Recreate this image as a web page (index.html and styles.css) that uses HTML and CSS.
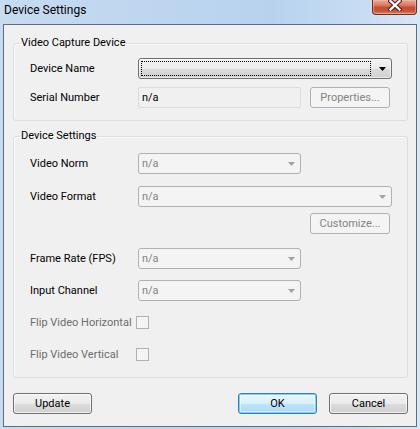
FILE: index.html
```html
<!DOCTYPE html>
<html>
<head>
<meta charset="utf-8">
<link rel="stylesheet" href="styles.css">
</head>
<body>
<div class="window">
  <div class="titlebar">
    <span class="title">Device Settings</span>
    <div class="close">
      <svg width="14" height="11" viewBox="0 0 14 11">
        <path d="M2.5 1 L11.5 9.5 M11.5 1 L2.5 9.5" stroke="#5b1a10" stroke-width="4.4" stroke-linecap="square" fill="none"/>
        <path d="M2.5 1 L11.5 9.5 M11.5 1 L2.5 9.5" stroke="#ffffff" stroke-width="2.4" stroke-linecap="square" fill="none"/>
      </svg>
    </div>
  </div>
  <div class="client">
    <fieldset class="group group-capture">
      <legend>Video Capture Device</legend>
      <div class="form">
        <div class="row">
          <span class="label">Device Name</span>
          <div class="combo combo-active combo-wide">
            <span class="focus"></span>
            <svg class="arrow" width="7" height="4" viewBox="0 0 7 4"><path d="M0 0H7L3.5 4Z" fill="#000"/></svg>
          </div>
        </div>
        <div class="row gap-8">
          <span class="label">Serial Number</span>
          <div class="textbox">n/a</div>
          <div class="btn btn-disabled btn-side">Properties...</div>
        </div>
      </div>
    </fieldset>

    <fieldset class="group group-settings">
      <legend>Device Settings</legend>
      <div class="form">
        <div class="row">
          <span class="label">Video Norm</span>
          <div class="combo combo-disabled combo-narrow">
            <span class="value">n/a</span>
            <svg class="arrow" width="7" height="4" viewBox="0 0 7 4"><path d="M0 0H7L3.5 4Z" fill="#a2a2a2"/></svg>
          </div>
        </div>
        <div class="row gap-12">
          <span class="label">Video Format</span>
          <div class="combo combo-disabled combo-wide">
            <span class="value">n/a</span>
            <svg class="arrow" width="7" height="4" viewBox="0 0 7 4"><path d="M0 0H7L3.5 4Z" fill="#a2a2a2"/></svg>
          </div>
        </div>
        <div class="row gap-6 row-button">
          <div class="btn btn-disabled">Customize...</div>
        </div>
        <div class="row gap-14">
          <span class="label">Frame Rate (FPS)</span>
          <div class="combo combo-disabled combo-narrow">
            <span class="value">n/a</span>
            <svg class="arrow" width="7" height="4" viewBox="0 0 7 4"><path d="M0 0H7L3.5 4Z" fill="#a2a2a2"/></svg>
          </div>
        </div>
        <div class="row gap-11">
          <span class="label">Input Channel</span>
          <div class="combo combo-disabled combo-narrow">
            <span class="value">n/a</span>
            <svg class="arrow" width="7" height="4" viewBox="0 0 7 4"><path d="M0 0H7L3.5 4Z" fill="#a2a2a2"/></svg>
          </div>
        </div>
        <div class="row gap-11">
          <span class="label label-disabled">Flip Video Horizontal</span>
          <span class="check"></span>
        </div>
        <div class="row gap-11">
          <span class="label label-disabled">Flip Video Vertical</span>
          <span class="check"></span>
        </div>
      </div>
    </fieldset>

    <div class="buttons">
      <div class="btn btn-normal">Update</div>
      <div class="spacer"></div>
      <div class="btn btn-default">OK</div>
      <div class="btn btn-normal">Cancel</div>
    </div>
  </div>
</div>
</body>
</html>
```

FILE: styles.css
```css
* { box-sizing: border-box; }

html, body {
  margin: 0;
  padding: 0;
}

body {
  width: 420px;
  height: 429px;
  overflow: hidden;
  font-family: Roboto, "Noto Sans", sans-serif;
  font-size: 11px;
  color: #000;
}

.window {
  width: 420px;
  height: 429px;
  display: flex;
  flex-direction: column;
  background: linear-gradient(to right, #c7dbf1 0%, #bdd5ef 40%, #b8d2ee 65%, #c6dcf3 85%, #d6e7f8 100%);
}

.titlebar {
  height: 24px;
  flex: none;
  display: flex;
  justify-content: space-between;
  align-items: flex-start;
  padding-left: 4px;
  padding-right: 3px;
}

.title {
  font-size: 12px;
  line-height: 20px;
  color: #000;
}

.close {
  width: 45px;
  height: 15px;
  border: 1px solid #7a2a1f;
  border-top: none;
  border-radius: 0 0 4px 4px;
  background: linear-gradient(to bottom, #e6a898 0%, #d9806b 35%, #c7492f 55%, #c85638 80%, #db8a6c 100%);
  box-shadow: inset 0 0 0 1px rgba(255, 200, 185, 0.45);
  display: flex;
  justify-content: center;
  align-items: flex-start;
}

.close svg {
  display: block;
}

.client {
  flex: 1;
  margin: 0 3px 2px 3px;
  border: 1px solid #5f6e7f;
  background: #f0f0f0;
  padding: 10px 8px 0 9px;
  display: flex;
  flex-direction: column;
}

.group {
  margin: 0;
  min-width: 0;
  border: 1px solid #d5dfe5;
  border-radius: 3px;
  padding: 7px 6px 12px 6px;
  box-shadow: inset 1px 1px 0 #fbfbfb;
}

.group legend {
  padding: 0 1px;
  line-height: 16px;
  color: #000;
}

.group-settings {
  margin-top: 7px;
  padding-top: 9px;
}

.form {
  padding-left: 10px;
  display: flex;
  flex-direction: column;
}

.row {
  height: 21px;
  display: flex;
  align-items: center;
}

.gap-6 { margin-top: 6px; }
.gap-8 { margin-top: 8px; }
.gap-11 { margin-top: 11px; }
.gap-12 { margin-top: 12px; }
.gap-14 { margin-top: 14px; }

.label {
  width: 108px;
  flex: none;
  white-space: nowrap;
}

.label-disabled {
  color: #6d6d6d;
}

.combo {
  height: 21px;
  border-radius: 3px;
  display: flex;
  align-items: center;
  justify-content: space-between;
  padding: 0 5px 0 3px;
}

.combo-wide { width: 254px; }
.combo-narrow { width: 163px; }

.combo-active {
  border: 1px solid #707070;
  background: linear-gradient(to bottom, #f2f2f2 0%, #ebebeb 50%, #dddddd 50%, #cfcfcf 100%);
  box-shadow: inset 0 0 0 1px rgba(255, 255, 255, 0.6);
  padding-left: 2px;
}

.focus {
  width: 230px;
  height: 15px;
  border: 1px dotted #000;
}

.combo-disabled {
  border: 1px solid #adb2b5;
  background: #f4f4f4;
  color: #838383;
}

.combo .arrow {
  display: block;
  flex: none;
}

.value {
  line-height: 19px;
}

.textbox {
  width: 163px;
  height: 21px;
  border: 1px solid #dadcdf;
  border-radius: 2px;
  background: #f0f0f0;
  padding: 0 3px;
  line-height: 19px;
}

.btn {
  width: 80px;
  height: 21px;
  border-radius: 3px;
  display: flex;
  align-items: center;
  justify-content: center;
  flex: none;
}

.btn-side {
  margin-left: 9px;
}

.btn-disabled {
  border: 1px solid #adb2b5;
  background: #f4f4f4;
  color: #838383;
}

.row-button {
  padding-left: 280px;
}

.btn-normal {
  width: 79px;
  border: 1px solid #707070;
  background: linear-gradient(to bottom, #f2f2f2 0%, #ebebeb 50%, #dddddd 50%, #cfcfcf 100%);
  box-shadow: inset 0 0 0 1px rgba(255, 255, 255, 0.7);
}

.btn-default {
  width: 79px;
  border: 1px solid #3c7fb1;
  background: linear-gradient(to bottom, #eaf6fd 0%, #d9f0fc 50%, #bee6fd 50%, #a7d9f5 100%);
  box-shadow: inset 0 0 0 1px #76d0f5, inset 0 0 0 2px rgba(255, 255, 255, 0.5);
}

.check {
  width: 13px;
  height: 13px;
  margin-left: -2px;
  border: 1px solid #b1b1b1;
  background: #f4f4f4;
}

.buttons {
  margin-top: 15px;
  display: flex;
  align-items: center;
}

.buttons .spacer {
  flex: 1;
}

.buttons .btn-default {
  margin-right: 12px;
}
```
